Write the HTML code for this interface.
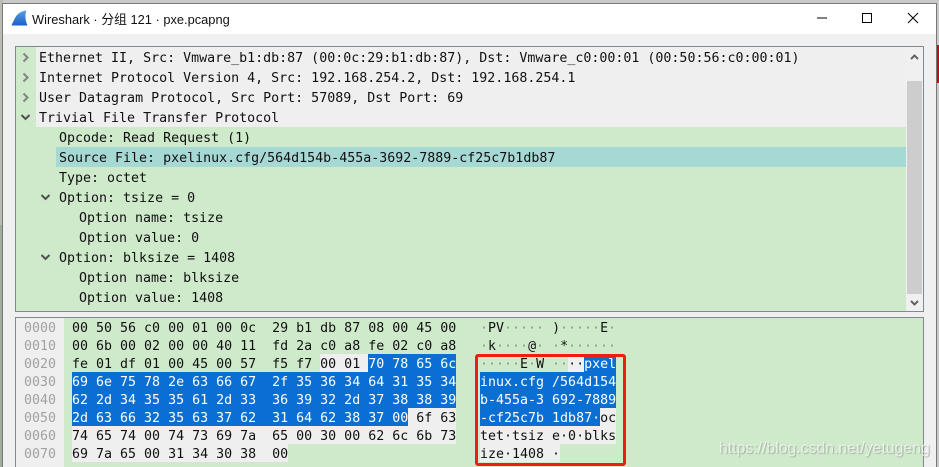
<!DOCTYPE html>
<html>
<head>
<meta charset="utf-8">
<style>
html,body{margin:0;padding:0;width:939px;height:467px;overflow:hidden;background:#c9c9c9}
div{position:absolute;box-sizing:border-box}
.t{font:13.3px/20px "DejaVu Sans Mono",monospace;color:#111;white-space:pre;height:20px;margin-top:2px}
.h{font:13.3px/18px "DejaVu Sans Mono",monospace;color:#111;white-space:pre;height:18px;margin-top:2px}
.w{color:#fff}
.off{color:#a2a2a2;left:24px}
.d{color:#7f9f80}
.blue{background:#0a6fd2}
.gray{background:#efefef}
svg{position:absolute;overflow:visible}
</style>
</head>
<body>
<div style="left:0;top:0;width:3px;height:467px;background:#b9bdb5"></div>
<div style="left:0;top:225px;width:3px;height:242px;background:#a3ad9f"></div>
<div style="left:936px;top:0;width:3px;height:467px;background:#c9c9c9"></div>
<div style="left:936px;top:45px;width:3px;height:38px;background:#b5121c"></div>

<!-- window -->
<div style="left:2px;top:3px;width:935px;height:464px;background:#f0f0f0;border:1px solid #777;border-bottom:0"></div>
<div style="left:3px;top:4px;width:933px;height:30px;background:#fff"></div>

<svg style="left:11px;top:10px" width="17" height="16" viewBox="0 0 17 16">
<defs><linearGradient id="g" x1="0" y1="0" x2="0" y2="1"><stop offset="0" stop-color="#5a9ee6"/><stop offset="1" stop-color="#1a5fc4"/></linearGradient></defs>
<path d="M15.5 0.5C10 1 6 4 4 8C3 10.5 1.5 12.5 0.5 15.5H16.5C14.5 11 13.5 5 15.5 0.5Z" fill="url(#g)"/>
</svg>
<div style="left:32px;top:10px;height:20px;font:12.85px/20px 'Liberation Sans','Noto Sans CJK SC',sans-serif;color:#111;white-space:pre">Wireshark · 分组 121 · pxe.pcapng</div>

<svg style="left:0;top:0" width="939" height="40">
<path d="M817 18H827" stroke="#000" stroke-width="1" fill="none"/>
<rect x="862.5" y="13.5" width="9" height="9" stroke="#000" fill="none"/>
<path d="M908 13L918 23M918 13L908 23" stroke="#000" stroke-width="1" fill="none"/>
</svg>

<!-- tree pane -->
<div style="left:15px;top:46px;width:909px;height:266px;background:#cfeacb;border:1px solid #7f8a90"></div>
<div style="left:36px;top:47px;width:871px;height:80px;background:#efefef"></div>
<div style="left:56px;top:147px;width:850px;height:20px;background:#a6d8d4"></div>

<!-- scrollbar -->
<div style="left:906px;top:47px;width:17px;height:264px;background:#f0f0f0"></div>
<div style="left:907px;top:81px;width:15px;height:213px;background:#cdcdcd"></div>
<svg style="left:0;top:0" width="939" height="330">
<path d="M911 59L914.5 55.5L918 59" stroke="#606060" stroke-width="2" fill="none"/>
<path d="M911 301L914.5 304.5L918 301" stroke="#606060" stroke-width="2" fill="none"/>
<g stroke="#858585" stroke-width="2" fill="none">
<path d="M23.5 53.5L27.5 57.5L23.5 61.5"/>
<path d="M23.5 73.5L27.5 77.5L23.5 81.5"/>
<path d="M23.5 93.5L27.5 97.5L23.5 101.5"/>
</g>
<g stroke="#505050" stroke-width="2" fill="none">
<path d="M21.5 115L25.5 119L29.5 115"/>
<path d="M41.5 195L45.5 199L49.5 195"/>
<path d="M41.5 255L45.5 259L49.5 255"/>
</g>
</svg>

<div class="t" style="left:39px;top:47px">Ethernet II, Src: Vmware_b1:db:87 (00:0c:29:b1:db:87), Dst: Vmware_c0:00:01 (00:50:56:c0:00:01)</div>
<div class="t" style="left:39px;top:67px">Internet Protocol Version 4, Src: 192.168.254.2, Dst: 192.168.254.1</div>
<div class="t" style="left:39px;top:87px">User Datagram Protocol, Src Port: 57089, Dst Port: 69</div>
<div class="t" style="left:39px;top:107px">Trivial File Transfer Protocol</div>
<div class="t" style="left:59px;top:127px">Opcode: Read Request (1)</div>
<div class="t" style="left:59px;top:147px">Source File: pxelinux.cfg/564d154b-455a-3692-7889-cf25c7b1db87</div>
<div class="t" style="left:59px;top:167px">Type: octet</div>
<div class="t" style="left:59px;top:187px">Option: tsize = 0</div>
<div class="t" style="left:79px;top:207px">Option name: tsize</div>
<div class="t" style="left:79px;top:227px">Option value: 0</div>
<div class="t" style="left:59px;top:247px">Option: blksize = 1408</div>
<div class="t" style="left:79px;top:267px">Option name: blksize</div>
<div class="t" style="left:79px;top:287px">Option value: 1408</div>

<!-- bytes pane -->
<div style="left:15px;top:317px;width:909px;height:150px;background:#cfeacb;border:1px solid #7f8a90;border-bottom:0"></div>
<div style="left:16px;top:318px;width:48px;height:149px;background:#efefef"></div>

<div class="gray" style="left:320px;top:354px;width:48px;height:18px"></div>
<div class="blue" style="left:368px;top:354px;width:88px;height:18px"></div>
<div class="blue" style="left:72px;top:372px;width:384px;height:36px"></div>
<div class="blue" style="left:72px;top:408px;width:336px;height:18px"></div>
<div class="gray" style="left:408px;top:408px;width:48px;height:18px"></div>
<div class="gray" style="left:72px;top:426px;width:384px;height:18px"></div>
<div class="gray" style="left:72px;top:444px;width:216px;height:18px"></div>

<div class="gray" style="left:568px;top:354px;width:16px;height:18px"></div>
<div class="blue" style="left:584px;top:354px;width:32px;height:18px"></div>
<div class="blue" style="left:480px;top:372px;width:136px;height:36px"></div>
<div class="blue" style="left:480px;top:408px;width:120px;height:18px"></div>
<div class="gray" style="left:600px;top:408px;width:16px;height:18px"></div>
<div class="gray" style="left:480px;top:426px;width:136px;height:18px"></div>
<div class="gray" style="left:480px;top:444px;width:80px;height:18px"></div>

<div class="h off" style="top:318px">0000</div>
<div class="h off" style="top:336px">0010</div>
<div class="h off" style="top:354px">0020</div>
<div class="h off" style="top:372px">0030</div>
<div class="h off" style="top:390px">0040</div>
<div class="h off" style="top:408px">0050</div>
<div class="h off" style="top:426px">0060</div>
<div class="h off" style="top:444px">0070</div>

<div class="h" style="left:72px;top:318px">00 50 56 c0 00 01 00 0c  29 b1 db 87 08 00 45 00</div>
<div class="h" style="left:72px;top:336px">00 6b 00 02 00 00 40 11  fd 2a c0 a8 fe 02 c0 a8</div>
<div class="h" style="left:72px;top:354px">fe 01 df 01 00 45 00 57  f5 f7 00 01 <span class="w">70 78 65 6c</span></div>
<div class="h w" style="left:72px;top:372px">69 6e 75 78 2e 63 66 67  2f 35 36 34 64 31 35 34</div>
<div class="h w" style="left:72px;top:390px">62 2d 34 35 35 61 2d 33  36 39 32 2d 37 38 38 39</div>
<div class="h" style="left:72px;top:408px"><span class="w">2d 63 66 32 35 63 37 62  31 64 62 38 37 00 </span>6f 63</div>
<div class="h" style="left:72px;top:426px">74 65 74 00 74 73 69 7a  65 00 30 00 62 6c 6b 73</div>
<div class="h" style="left:72px;top:444px">69 7a 65 00 31 34 30 38  00</div>

<div class="h" style="left:480px;top:318px"><span class="d">·</span>PV<span class="d">·····</span> )<span class="d">·····</span>E<span class="d">·</span></div>
<div class="h" style="left:480px;top:336px"><span class="d">·</span>k<span class="d">····</span>@<span class="d">·</span> <span class="d">·</span>*<span class="d">······</span></div>
<div class="h" style="left:480px;top:354px"><span class="d">·····</span>E<span class="d">·</span>W <span class="d">··</span>··<span class="w">pxel</span></div>
<div class="h w" style="left:480px;top:372px">inux.cfg /564d154</div>
<div class="h w" style="left:480px;top:390px">b-455a-3 692-7889</div>
<div class="h" style="left:480px;top:408px"><span class="w">-cf25c7b 1db87·</span>oc</div>
<div class="h" style="left:480px;top:426px">tet·tsiz e·0·blks</div>
<div class="h" style="left:480px;top:444px">ize·1408 ·</div>

<!-- red annotation -->
<div style="left:475px;top:354px;width:151px;height:112px;border:3px solid #f01c14;border-radius:3px"></div>

<!-- watermark -->
<div style="left:719px;top:439px;height:20px;font:15.8px/20px 'Liberation Sans',sans-serif;color:rgba(255,255,255,.62);text-shadow:1px 1px 1px rgba(110,110,110,.45);white-space:pre">https://blog.csdn.net/yetugeng</div>
</body>
</html>
